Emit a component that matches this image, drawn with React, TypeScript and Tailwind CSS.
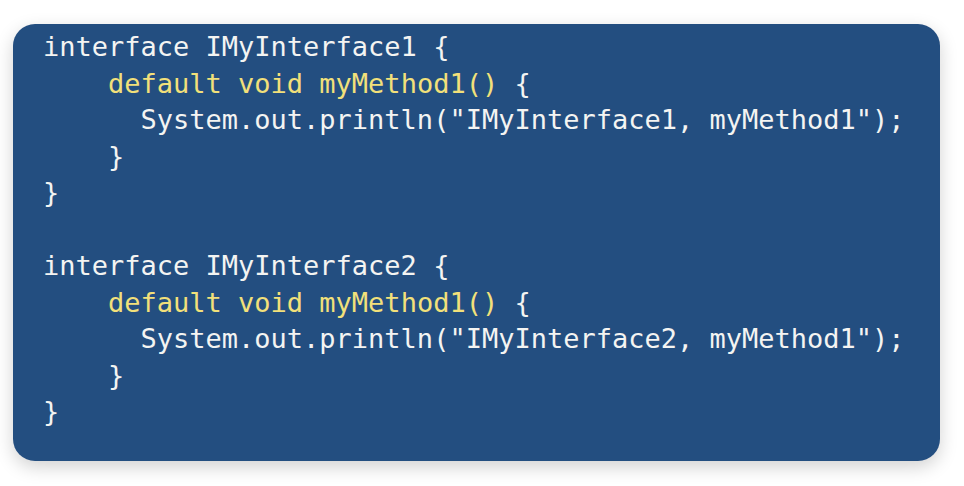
import React from "react";

type Tok = { t: string; y?: boolean };

const lines: Tok[][] = [
  [{ t: "interface IMyInterface1 {" }],
  [{ t: "    " }, { t: "default void myMethod1()", y: true }, { t: " {" }],
  [{ t: "      System.out.println(\"IMyInterface1, myMethod1\");" }],
  [{ t: "    }" }],
  [{ t: "}" }],
  [{ t: " " }],
  [{ t: "interface IMyInterface2 {" }],
  [{ t: "    " }, { t: "default void myMethod1()", y: true }, { t: " {" }],
  [{ t: "      System.out.println(\"IMyInterface2, myMethod1\");" }],
  [{ t: "    }" }],
  [{ t: "}" }],
];

export default function App() {
  return (
    <div className="w-[964px] h-[486px] bg-white pt-[24px] pl-[13px]">
      <div className="w-[927px] h-[437px] rounded-[22px] bg-[#234e80] shadow-[0_6px_18px_rgba(0,0,0,0.18)] pl-[30px] pt-[5px]">
        <pre className="font-['DejaVu_Sans_Mono',monospace] text-[27px] leading-[36.5px] text-[#f4f4f2]">
          {lines.map((line, i) => (
            <div key={i}>
              {line.map((tok, j) => (
                <span key={j} className={tok.y ? "text-[#f2e07a]" : undefined}>
                  {tok.t}
                </span>
              ))}
            </div>
          ))}
        </pre>
      </div>
    </div>
  );
}
